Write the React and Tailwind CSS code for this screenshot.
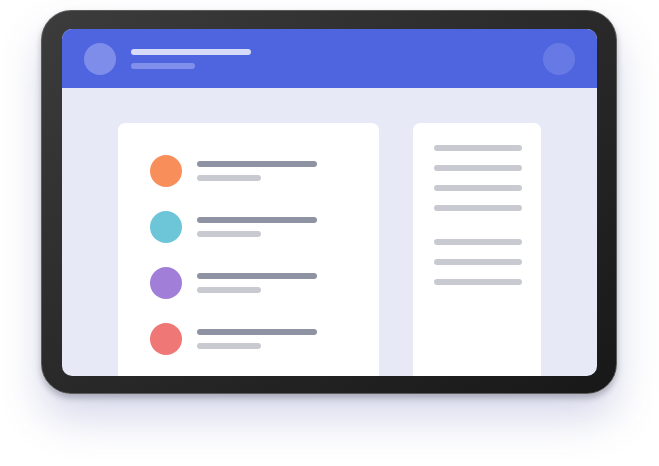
import React from 'react';

const rows = ['bg-[#f88f5b]', 'bg-[#6cc6d8]', 'bg-[#a17fd9]', 'bg-[#ef7775]'];

const App = () => {
    return (
        <div className="w-[659px] h-[466px] bg-white overflow-hidden pl-[41px] pt-[10px]">
            {/* Tablet frame */}
            <div className="w-[576px] h-[384px] rounded-[30px] bg-gradient-to-br from-[#3c3c3c] to-[#181818] border border-[#5a5a5a] pt-[18px] pl-[20px] pr-[19px] pb-[17px] shadow-[0_24px_40px_rgba(90,100,170,0.25),0_4px_6px_rgba(0,0,0,0.25)]">
                <div className="w-full h-full rounded-[10px] overflow-hidden bg-[#e7e9f6] flex flex-col">
                    {/* Header */}
                    <div className="h-[59px] bg-[#4f65df] flex items-center px-[22px] shrink-0">
                        <div className="w-8 h-8 rounded-full bg-[#7e8dea]" />
                        <div className="ml-[15px] flex flex-col gap-2">
                            <div className="w-[120px] h-[6px] rounded-full bg-[#d6dbf8]" />
                            <div className="w-16 h-[6px] rounded-full bg-[#7f8fea]" />
                        </div>
                        <div className="ml-auto w-8 h-8 rounded-full bg-[#6679e4]" />
                    </div>

                    {/* Body */}
                    <div className="flex-1 flex gap-[34px] px-[56px] pt-[35px]">
                        <div className="w-[261px] bg-white rounded-t-[7px] pt-8 pl-8 flex flex-col gap-6">
                            {rows.map((c, i) => (
                                <div key={i} className="flex items-center gap-[15px]">
                                    <div className={`w-8 h-8 rounded-full ${c}`} />
                                    <div className="flex flex-col gap-2">
                                        <div className="w-[120px] h-[6px] rounded-full bg-[#8f93a3]" />
                                        <div className="w-16 h-[6px] rounded-full bg-[#c9cad1]" />
                                    </div>
                                </div>
                            ))}
                        </div>

                        <div className="w-[128px] bg-white rounded-t-[7px] pt-[22px] pl-[21px] flex flex-col">
                            <div className="flex flex-col gap-[14px]">
                                {[0, 1, 2, 3].map((i) => (
                                    <div key={i} className="w-[88px] h-[6px] rounded-full bg-[#c9cad1]" />
                                ))}
                            </div>
                            <div className="flex flex-col gap-[14px] mt-[28px]">
                                {[0, 1, 2].map((i) => (
                                    <div key={i} className="w-[88px] h-[6px] rounded-full bg-[#c9cad1]" />
                                ))}
                            </div>
                        </div>
                    </div>
                </div>
            </div>
        </div>
    );
};

export default App;
